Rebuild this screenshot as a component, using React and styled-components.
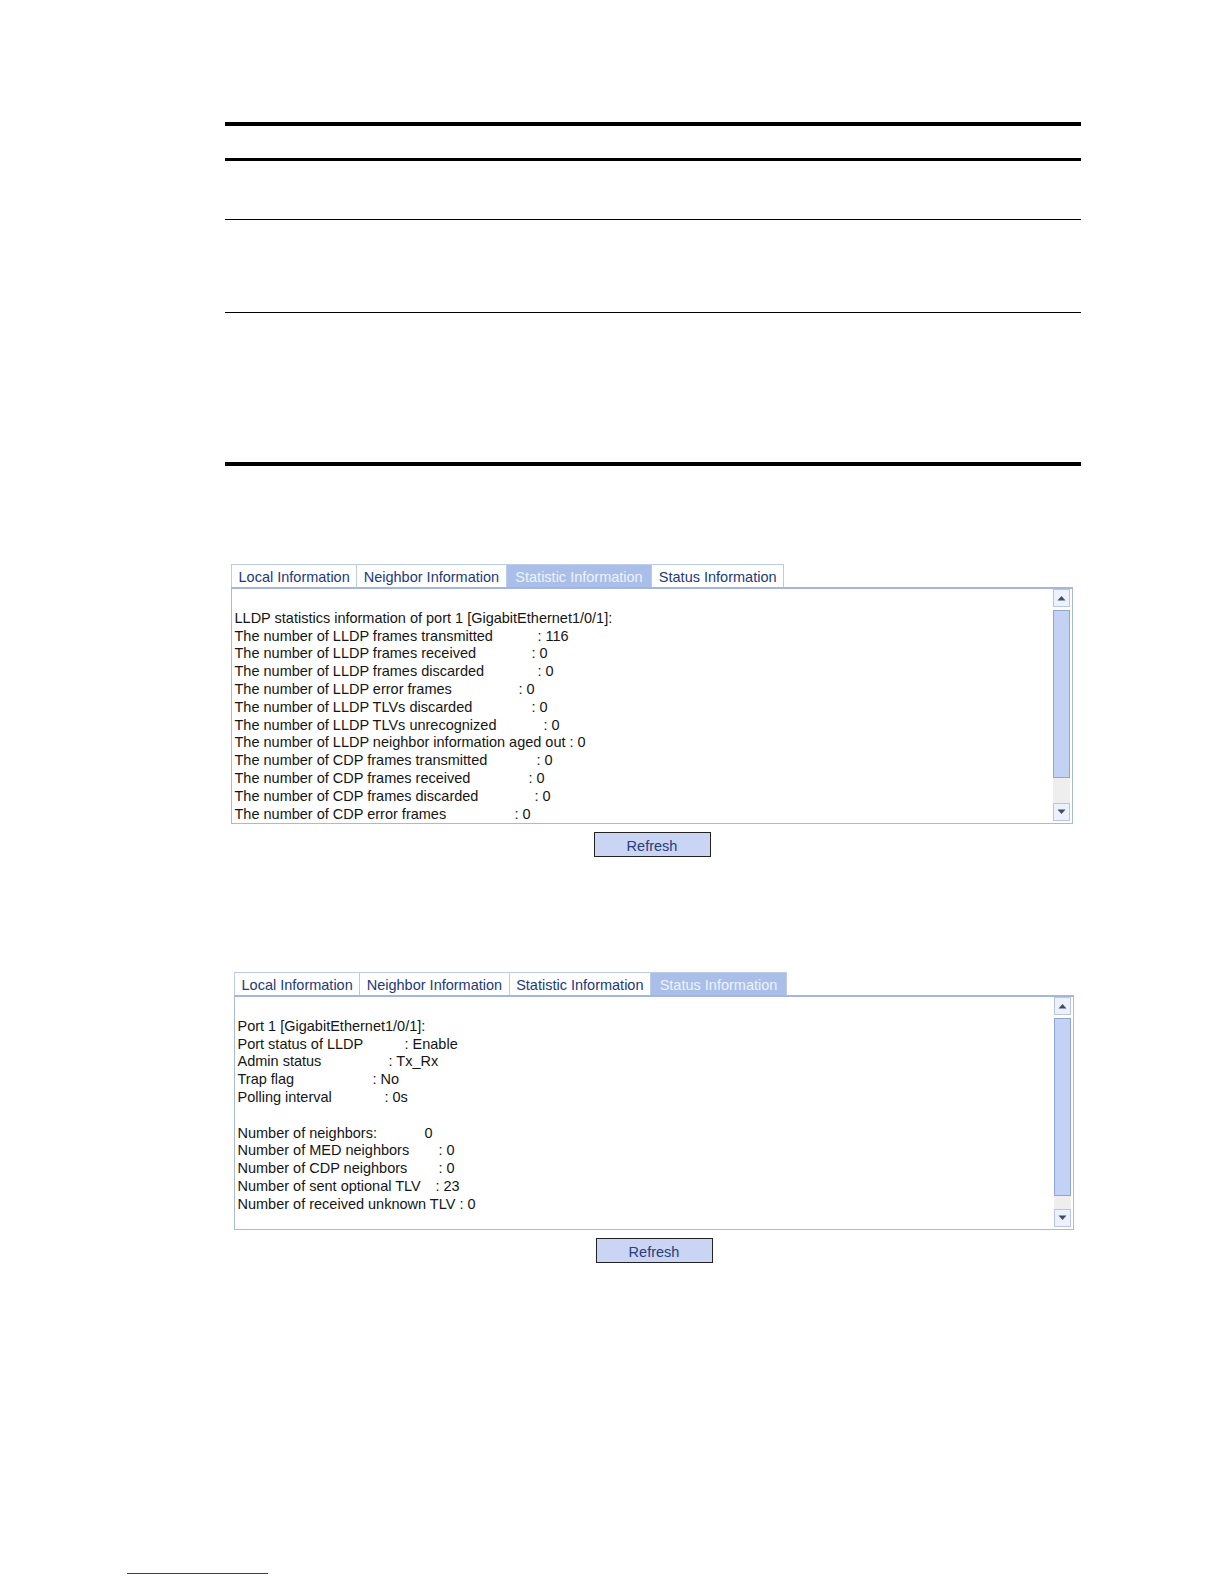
import React from "react";
import styled, { createGlobalStyle } from "styled-components";

const Global = createGlobalStyle`
  html, body { margin: 0; padding: 0; background: #fff; }
  body { font-family: "Liberation Sans", Arial, sans-serif; color: #111; }
`;

const Page = styled.div`
  padding-top: 122px;
  display: flex;
  flex-direction: column;
  align-items: flex-start;
`;

const Table = styled.div`
  margin-left: 225px;
  width: 856px;
  border-top: 4px solid #000;
  border-bottom: 4px solid #000;
  display: flex;
  flex-direction: column;
`;

const TRow = styled.div`
  height: ${(p) => p.$h}px;
  border-bottom: ${(p) => (p.$rule ? `${p.$rule}px solid #000` : "none")};
`;

const Panel = styled.div`
  margin-left: ${(p) => p.$left}px;
  margin-top: ${(p) => p.$top}px;
  width: ${(p) => p.$width}px;
  display: flex;
  flex-direction: column;
  align-items: stretch;
`;

const Tabs = styled.div`
  display: flex;
  height: 24px;
  align-items: flex-end;
`;

const Tab = styled.div`
  height: 23px;
  box-sizing: border-box;
  padding: 1px ${(p) => (p.$active ? "8.7px" : "6.5px")} 0;
  display: flex;
  align-items: center;
  font-size: 14.5px;
  white-space: nowrap;
  border: 1px solid #bccbe8;
  border-bottom: none;
  margin-right: -1px;
  background: ${(p) => (p.$active ? "#a9bfe9" : "#fff")};
  color: ${(p) => (p.$active ? "#eef3fd" : "#22397a")};
`;

const Box = styled.div`
  height: ${(p) => p.$h}px;
  box-sizing: border-box;
  border: 1px solid #a9b9dc;
  border-top: 2px solid #a4b6de;
  display: flex;
  background: #fff;
`;

const TextArea = styled.div`
  flex: 1;
  padding: 3px 0 0 2.5px;
  font-size: 14.5px;
  line-height: 17.8px;
  color: #151515;
  overflow: hidden;
`;

const Line = styled.div`
  height: 17.8px;
  white-space: pre;
`;

const Label = styled.span`
  display: inline-block;
  width: ${(p) => p.$w}px;
`;

const Scroll = styled.div`
  width: 17px;
  margin: 0 2px 2px 0;
  display: flex;
  flex-direction: column;
`;

const ScrollBtn = styled.div`
  height: 18px;
  box-sizing: border-box;
  border: 1px solid #b7c5e6;
  background: #edf1fb;
  display: flex;
  align-items: center;
  justify-content: center;
`;

const Thumb = styled.div`
  height: ${(p) => p.$h}px;
  margin-top: 3px;
  box-sizing: border-box;
  border: 1px solid #8fa4d8;
  background: #c3d1f5;
`;

const Track = styled.div`
  flex: 1;
  background: #eeeeee;
`;

const Actions = styled.div`
  display: flex;
  justify-content: center;
  margin-top: 8px;
`;

const Button = styled.button`
  width: 117px;
  height: 25px;
  box-sizing: border-box;
  border: 1px solid #222;
  background: #c9d5f2;
  color: #2a3d7c;
  font-family: "Liberation Sans", Arial, sans-serif;
  font-size: 14.5px;
  padding: 2px 0 0;
  cursor: pointer;
`;

const Footnote = styled.div`
  margin-left: 127px;
  margin-top: ${(p) => p.$top}px;
  width: 141px;
  border-top: 1px solid #2b3a8c;
`;

const Arrow = ({ up }) => (
  <svg width="9" height="6" viewBox="0 0 9 6">
    <path d={up ? "M0.5 5.5 L4.5 1 L8.5 5.5 Z" : "M0.5 0.5 L4.5 5 L8.5 0.5 Z"} fill="#3c4b6c" />
  </svg>
);

const TAB_NAMES = ["Local Information", "Neighbor Information", "Statistic Information", "Status Information"];

const LldpPanel = ({ left, top, width, active, lines, boxH, thumbH }) => (
  <Panel $left={left} $top={top} $width={width}>
    <Tabs>
      {TAB_NAMES.map((t) => (
        <Tab key={t} $active={t === active}>{t}</Tab>
      ))}
    </Tabs>
    <Box $h={boxH}>
      <TextArea>
        {lines.map((l, i) => (
          <Line key={i}>
            {l.length === 3 ? (
              <>
                <Label $w={l[1]}>{l[0]}</Label>
                {l[2]}
              </>
            ) : (
              l[0]
            )}
          </Line>
        ))}
      </TextArea>
      <Scroll>
        <ScrollBtn><Arrow up /></ScrollBtn>
        <Thumb $h={thumbH} />
        <Track />
        <ScrollBtn><Arrow /></ScrollBtn>
      </Scroll>
    </Box>
    <Actions>
      <Button>Refresh</Button>
    </Actions>
  </Panel>
);

const STAT_LINES = [
  [""],
  ["LLDP statistics information of port 1 [GigabitEthernet1/0/1]:"],
  ["The number of LLDP frames transmitted", 303, ": 116"],
  ["The number of LLDP frames received", 297, ": 0"],
  ["The number of LLDP frames discarded", 303, ": 0"],
  ["The number of LLDP error frames", 284, ": 0"],
  ["The number of LLDP TLVs discarded", 297, ": 0"],
  ["The number of LLDP TLVs unrecognized", 309, ": 0"],
  ["The number of LLDP neighbor information aged out : 0"],
  ["The number of CDP frames transmitted", 302, ": 0"],
  ["The number of CDP frames received", 294, ": 0"],
  ["The number of CDP frames discarded", 300, ": 0"],
  ["The number of CDP error frames", 280, ": 0"],
];

const STATUS_LINES = [
  [""],
  ["Port 1 [GigabitEthernet1/0/1]:"],
  ["Port status of LLDP", 167, ": Enable"],
  ["Admin status", 151, ": Tx_Rx"],
  ["Trap flag", 135, ": No"],
  ["Polling interval", 147, ": 0s"],
  [""],
  ["Number of neighbors:", 187, "0"],
  ["Number of MED neighbors", 201, ": 0"],
  ["Number of CDP neighbors", 201, ": 0"],
  ["Number of sent optional TLV", 198, ": 23"],
  ["Number of received unknown TLV : 0"],
];

export default function App() {
  return (
    <>
      <Global />
      <Page>
        <Table>
          <TRow $h={32} $rule={3} />
          <TRow $h={58} $rule={1} />
          <TRow $h={92} $rule={1} />
          <TRow $h={149} />
        </Table>
        <LldpPanel
          left={231}
          top={97}
          width={842}
          active="Statistic Information"
          lines={STAT_LINES}
          boxH={237}
          thumbH={168}
        />
        <LldpPanel
          left={234}
          top={114}
          width={840}
          active="Status Information"
          lines={STATUS_LINES}
          boxH={235}
          thumbH={178}
        />
        <Footnote $top={310} />
      </Page>
    </>
  );
}
